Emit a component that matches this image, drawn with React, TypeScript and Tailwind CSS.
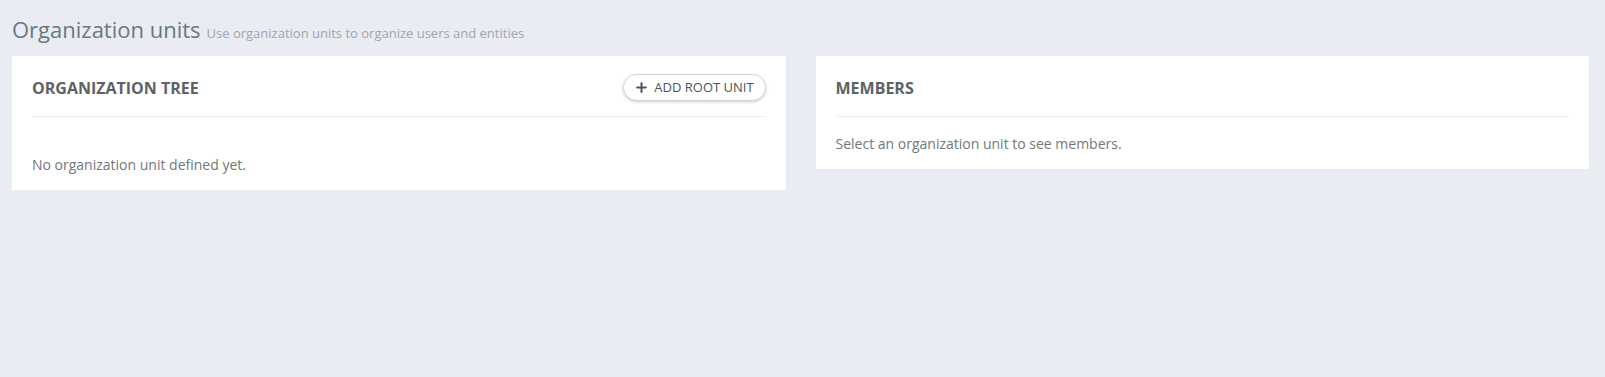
import { Plus } from "lucide-react";

function Card({ title, action, children, bodyClass }: { title: string; action?: React.ReactNode; children: React.ReactNode; bodyClass: string }) {
  return (
    <div className="bg-white px-[20px]">
      <div className="flex items-center justify-between pt-[18px] pb-[15px] border-b border-[#eceef1] min-h-[60px]">
        <span className="text-[16px] leading-[22px] font-bold uppercase text-[#5e6266]">{title}</span>
        {action ?? <span className="h-[27px]" />}
      </div>
      <div className={bodyClass}>{children}</div>
    </div>
  );
}

export default function App() {
  return (
    <div className="min-h-[377px] bg-[#e9ecf3] pl-[12px] pr-[16px] pt-[14px] font-['Open_Sans',sans-serif]">
      <div className="flex items-baseline mb-[12px] h-[30px]">
        <h1 className="text-[22px] leading-[30px] font-normal text-[#697882]">Organization units</h1>
        <span className="ml-[6px] text-[13px] text-[#9ea5b0]">Use organization units to organize users and entities</span>
      </div>
      <div className="grid grid-cols-2 gap-[30px] items-start">
        <Card
          title="Organization tree"
          bodyClass="pt-[38px] pb-[15px] text-[14px] leading-[20px] text-[#73777c]"
          action={
            <button className="flex items-center justify-center gap-[5px] w-[143px] h-[27px] rounded-full border border-[#d6d6d6] bg-white shadow-[0_1px_3px_rgba(0,0,0,0.2)] text-[13px] font-normal text-[#4f5358] uppercase">
              <Plus size={15} strokeWidth={3.2} />
              Add root unit
            </button>
          }
        >
          No organization unit defined yet.
        </Card>
        <Card title="Members" bodyClass="pt-[17px] pb-[15px] text-[14px] leading-[20px] text-[#73777c]">
          Select an organization unit to see members.
        </Card>
      </div>
    </div>
  );
}
